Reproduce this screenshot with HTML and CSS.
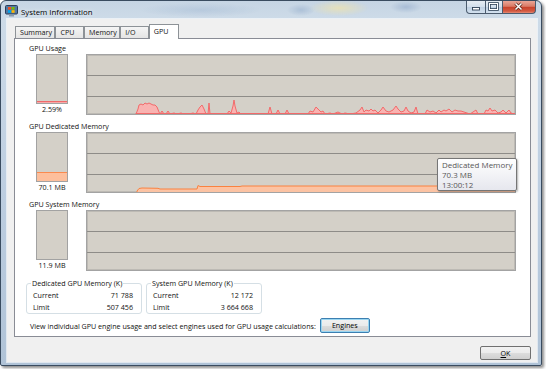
FILE: index.html
```html
<html>
    <head>
        <link rel="stylesheet" href="styles.css">
    </head>

    <body>
        <div class="window">
            <div class="titlebar">
                <svg class="app-icon" width="13" height="12" viewBox="0 0 13 12">
                    <rect x="0.5" y="0.5" width="12" height="8.5" rx="1" fill="#5479a3" stroke="#2b3f5a"/>
                    <rect x="3" y="2" width="3" height="2.6" fill="#f25022"/>
                    <rect x="6.6" y="2" width="3" height="2.6" fill="#7fba00"/>
                    <rect x="3" y="5.2" width="3" height="2.6" fill="#00a4ef"/>
                    <rect x="6.6" y="5.2" width="3" height="2.6" fill="#ffb900"/>
                    <rect x="4" y="9.5" width="5" height="2" fill="#8a9bae"/>
                </svg>
                <span class="title">System Information</span>
                <div class="caption">
                    <span class="cb cb-min">
                        <svg width="20" height="13"><rect x="6.5" y="7.5" width="7" height="2.5" fill="#fff" stroke="#2f4257" stroke-width="0.9"/></svg>
                    </span>
                    <span class="cb cb-max">
                        <svg width="17" height="13"><rect x="4.5" y="3.5" width="8" height="6" fill="none" stroke="#2f4257" stroke-width="2.6"/><rect x="4.5" y="3.5" width="8" height="6" fill="none" stroke="#fff" stroke-width="1"/></svg>
                    </span>
                    <span class="cb cb-close">
                        <svg width="33" height="13"><path d="M13.5 3.5 L19.5 9.5 M19.5 3.5 L13.5 9.5" stroke="#5a2418" stroke-width="3"/><path d="M13.5 3.5 L19.5 9.5 M19.5 3.5 L13.5 9.5" stroke="#fff" stroke-width="1.5"/></svg>
                    </span>
                </div>
            </div>

            <div class="client">
                <div class="tabs">
                    <span class="tab">Summary</span>
                    <span class="tab">CPU</span>
                    <span class="tab">Memory</span>
                    <span class="tab">I/O</span>
                    <span class="tab active">GPU</span>
                </div>

                <div class="panel">
                    <div class="meter">
                        <div class="meter-label">GPU Usage</div>
                        <div class="meter-body">
                            <div class="gauge-col">
                                <div class="gauge"><div class="gauge-fill fill-usage" style="height: 2px"></div></div>
                                <div class="gauge-value">2.59%</div>
                            </div>
                            <div class="graph">
                                <svg width="428" height="59" viewBox="1 1 428 59">
                                    <line class="grid" x1="0" y1="21.5" x2="430" y2="21.5"/>
                                    <line class="grid" x1="0" y1="42.5" x2="430" y2="42.5"/>
                                    <path class="plot-usage" d="M50,60 L52,55 53,51 55,50 57,51 59,49 61,50 63,49 65,50 67,51 69,51 71,53 73,58 74,60 76,57 78,60 80,60 82,57 84,60 88,59 91,60 95,59 98,60 103,60 107,59 110,60 112,56 114,53 116,51 118,55 120,60 122,60 123,49 124,60 131,60 141,60 143,57 145,59 147,52 148,46 149,52 151,59 153,58 155,60 182,60 184,53 186,60 190,60 192,56 194,60 199,60 201,56 203,60 222,60 224,57 227,58 230,53 232,55 235,58 237,57 239,60 244,59 247,60 252,58 256,60 259,59 264,60 270,59 274,56 276,53 278,58 280,56 283,57 285,55 287,57 289,56 292,59 295,56 297,53 300,57 303,58 307,56 310,52 312,55 315,58 318,57 320,53 322,57 325,59 328,58 330,53 332,60 339,60 341,56 344,58 347,57 350,59 353,56 355,58 358,56 360,57 363,55 366,58 369,56 372,57 375,57 378,58 381,59 384,60 387,58 390,56 392,60 398,60 400,56 402,57 404,54 406,57 409,56 412,59 415,58 417,56 420,59 423,56 425,59 428,60 429,59.5 L50,59.5 Z"/>
                                </svg>
                            </div>
                        </div>
                    </div>

                    <div class="meter">
                        <div class="meter-label">GPU Dedicated Memory</div>
                        <div class="meter-body">
                            <div class="gauge-col">
                                <div class="gauge"><div class="gauge-fill fill-memory" style="height: 9px"></div></div>
                                <div class="gauge-value">70.1 MB</div>
                            </div>
                            <div class="graph">
                                <svg width="428" height="59" viewBox="1 1 428 59">
                                    <line class="grid" x1="0" y1="21.5" x2="430" y2="21.5"/>
                                    <line class="grid" x1="0" y1="42.5" x2="430" y2="42.5"/>
                                    <path class="plot-memory" d="M51,61 L51,59 L53,56.5 L56,56 L72,56.3 L74,57 L111,57 L112,53.5 L114,54.5 L154,54.5 L156,54 L430,54 L430,61 Z"/>
                                </svg>
                                <div class="tooltip">
                                    <div>Dedicated Memory</div>
                                    <div>70.3 MB</div>
                                    <div>13:00:12</div>
                                </div>
                            </div>
                        </div>
                    </div>

                    <div class="meter">
                        <div class="meter-label">GPU System Memory</div>
                        <div class="meter-body">
                            <div class="gauge-col">
                                <div class="gauge"></div>
                                <div class="gauge-value">11.9 MB</div>
                            </div>
                            <div class="graph">
                                <svg width="428" height="59" viewBox="1 1 428 59">
                                    <line class="grid" x1="0" y1="21.5" x2="430" y2="21.5"/>
                                    <line class="grid" x1="0" y1="42.5" x2="430" y2="42.5"/>
                                </svg>
                            </div>
                        </div>
                    </div>

                    <div class="groups">
                        <fieldset class="group">
                            <legend>Dedicated GPU Memory (K)</legend>
                            <div class="row"><span>Current</span><span>71 788</span></div>
                            <div class="row"><span>Limit</span><span>507 456</span></div>
                        </fieldset>
                        <fieldset class="group">
                            <legend>System GPU Memory (K)</legend>
                            <div class="row"><span>Current</span><span>12 172</span></div>
                            <div class="row"><span>Limit</span><span>3 664 668</span></div>
                        </fieldset>
                    </div>

                    <div class="engines-row">
                        <span>View individual GPU engine usage and select engines used for GPU usage calculations:</span>
                        <a class="btn btn-default-focus">Engines</a>
                    </div>
                </div>

                <div class="footer">
                    <a class="btn btn-ok"><u>O</u>K</a>
                </div>
            </div>
        </div>
    </body>
</html>
```

FILE: styles.css
```css
* {
    box-sizing: border-box;
}

body {
    margin: 0;
    background-color: #fff;
}

.window {
    width: 542px;
    height: 366px;
    display: flex;
    flex-direction: column;
    padding: 0 4px 3px 6px;
    border: 1px solid #3a4c60;
    border-radius: 6px 6px 2px 2px;
    background: linear-gradient(180deg, #c6d5e4 0, #cddbe8 18px, #bccde0 55%, #b0c3d7 100%);
    box-shadow: 2px 2px 3px rgba(0, 0, 0, .45);
    font-family: "Open Sans", sans-serif;
    font-size: 7.15px;
    color: #111;
}

/* title bar */

.titlebar {
    height: 18px;
    display: flex;
    align-items: flex-start;
    margin: 0 -4px 0 -6px;
    padding: 0 5px 0 4px;
    border-radius: 5px 5px 0 0;
    background:
        radial-gradient(ellipse 30px 8px at 338px 7px, rgba(236, 226, 176, .8), transparent),
        radial-gradient(ellipse 14px 6px at 300px 9px, rgba(120, 150, 190, .35), transparent),
        radial-gradient(ellipse 16px 6px at 405px 6px, rgba(110, 140, 185, .35), transparent),
        radial-gradient(ellipse 60px 7px at 200px 9px, rgba(150, 175, 205, .35), transparent);
}

.app-icon {
    margin-top: 4px;
}

.title {
    margin: 5px 0 0 3px;
    line-height: 12px;
    font-size: 7.8px;
    color: #000;
    text-shadow: 0 0 5px rgba(255, 255, 255, .95);
}

.caption {
    margin-left: auto;
    display: flex;
}

.cb {
    height: 13px;
    display: block;
    border: 1px solid #4a5b6e;
    border-top: none;
    background: linear-gradient(180deg, rgba(255, 255, 255, .55), rgba(220, 232, 244, .45) 50%, rgba(180, 200, 222, .5) 51%, rgba(215, 230, 245, .6));
}

.cb svg {
    display: block;
    margin: -1px 0 0 -1px;
}

.cb-min {
    width: 20px;
    border-radius: 0 0 0 4px;
}

.cb-max {
    width: 17px;
    border-left: none;
}

.cb-close {
    width: 33px;
    border-left: none;
    border-radius: 0 0 4px 0;
    background: linear-gradient(180deg, #eaa596 0, #d97a66 45%, #c8412a 50%, #d35a42 85%, #e48c77 100%);
}

/* client area */

.client {
    flex: 1;
    display: flex;
    flex-direction: column;
    padding: 5px 6px 2px 7px;
    background-color: #f0f0f0;
    box-shadow: 0 0 0 1px rgba(255, 255, 255, .6);
}

.tabs {
    height: 14px;
    display: flex;
    align-items: flex-end;
    padding-left: 1px;
    position: relative;
    z-index: 1;
}

.tab {
    height: 12px;
    min-width: 28.5px;
    padding: 0 2.5px 0 4px;
    line-height: 11px;
    white-space: nowrap;
    border: 1px solid #8d9297;
    border-bottom: none;
    background: linear-gradient(180deg, #f5f5f5, #e4e4e4);
}

.tab.active {
    height: 15px;
    min-width: 30px;
    margin: 0 0 -1px 0;
    background: #fff;
    line-height: 12px;
}

.panel {
    height: 299px;
    padding: 4px 14px 0 14px;
    border: 1px solid #898c95;
    background-color: #fff;
}

/* meters */

.meter + .meter {
    margin-top: 6px;
}

.meter-label {
    line-height: 11px;
}

.meter-body {
    display: flex;
    align-items: flex-start;
    padding-left: 7px;
}

.gauge-col {
    width: 32px;
    display: flex;
    flex-direction: column;
    align-items: center;
}

.gauge {
    width: 32px;
    height: 50px;
    display: flex;
    flex-direction: column;
    justify-content: flex-end;
    border: 1px solid #a2a2a2;
    background-color: #d4d0c8;
}

.gauge-fill {
    width: 100%;
}

.fill-usage {
    background-color: #f7a9a9;
    border-top: 1px solid #f06a6a;
}

.fill-memory {
    background-color: #fdbf9c;
    border-top: 1px solid #fb8a4e;
}

.gauge-value {
    line-height: 11px;
    white-space: nowrap;
}

.graph {
    width: 430px;
    height: 61px;
    margin-left: 18px;
    position: relative;
    border: 1px solid #a3a3a3;
    box-shadow: inset 0 0 0 1px #bdbab4;
    background-color: #d4d0c8;
}

.graph svg {
    display: block;
}

.grid {
    stroke: #8e8c88;
    stroke-width: 1;
}

.plot-usage {
    fill: #f9b3b1;
    stroke: #f26a6a;
    stroke-width: 1;
}

.plot-memory {
    fill: #fcc3a3;
    stroke: #fa8240;
    stroke-width: 1;
}

.tooltip {
    position: absolute;
    left: 350px;
    top: 25px;
    width: 80px;
    height: 33px;
    padding: 1px 4px;
    border: 1px solid #767676;
    border-radius: 2px;
    background: linear-gradient(180deg, #ffffff, #e6e7ee);
    box-shadow: 1px 1px 2px rgba(0, 0, 0, .3);
    font-size: 7.95px;
    line-height: 10px;
    color: #575757;
    white-space: nowrap;
}

/* memory group boxes */

.groups {
    display: flex;
    gap: 4px;
    margin: 7px 0 0 -3px;
}

.group {
    width: 116px;
    min-width: 0;
    margin: 0;
    padding: 1px 8px 0 6px;
    border: 1px solid #d5dfe5;
    border-radius: 3px;
}

.group legend {
    padding: 0 1px;
    margin-left: -2px;
    line-height: 10px;
}

.row {
    display: flex;
    justify-content: space-between;
    line-height: 12px;
}

.engines-row {
    height: 15px;
    display: flex;
    align-items: center;
    margin-top: 4px;
    padding-left: 1px;
}

/* buttons */

.btn {
    display: inline-block;
    height: 15px;
    line-height: 13px;
    text-align: center;
    border: 1px solid #707070;
    border-radius: 2px;
    background: linear-gradient(180deg, #f2f2f2 0, #ebebeb 50%, #dddddd 51%, #cfcfcf 100%);
    color: #000;
    cursor: pointer;
}

.btn u {
    text-decoration: underline;
}

.btn-default-focus {
    width: 50px;
    margin-left: 4px;
    border-color: #3c7fb1;
    box-shadow: inset 0 0 0 1px #9ad6f1;
}

.footer {
    display: flex;
    justify-content: flex-end;
    padding-top: 9px;
}

.btn-ok {
    width: 51px;
    height: 14px;
    line-height: 12px;
}
```
